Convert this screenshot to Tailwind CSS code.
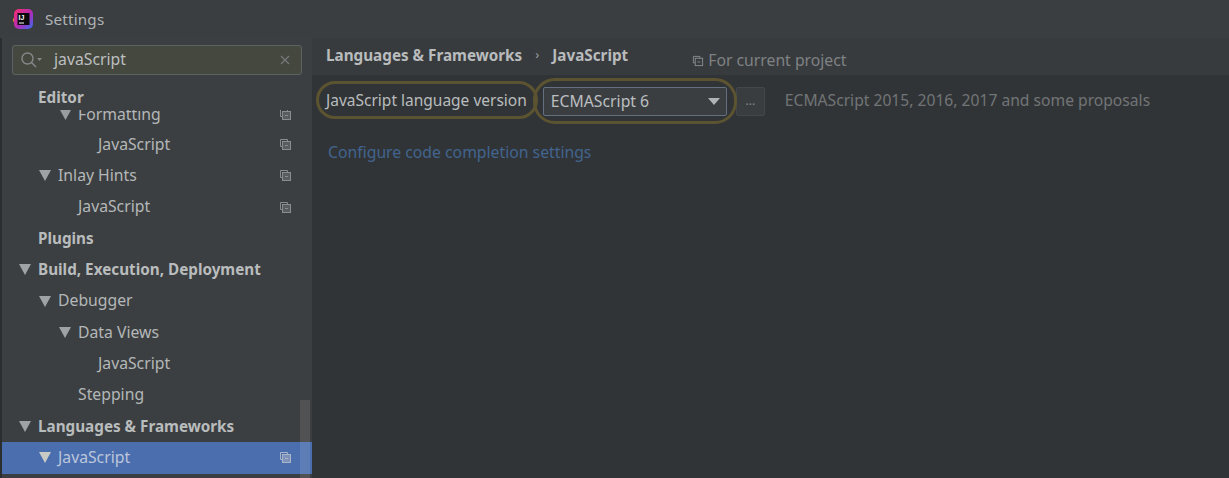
<!DOCTYPE html>
<html lang="en">
<head>
    <meta charset="UTF-8">
    <title>Settings</title>
    <script src="https://cdn.jsdelivr.net/npm/@tailwindcss/browser@4"></script>
</head>
<body class="bg-[#3a3d40] overflow-hidden">
    <div class="w-[1229px] h-[478px] relative flex flex-col font-['Noto_Sans','Open_Sans',sans-serif] text-[15.75px] text-[#b4b7b8] overflow-hidden">

        <!-- Title bar -->
        <div class="h-[38px] shrink-0 pl-[12px] flex items-center gap-[11px] bg-[#3b3e41]">
            <svg width="22" height="22" viewBox="0 0 22 22">
                <defs>
                    <linearGradient id="logo" x1="0" y1="0" x2="1" y2="1">
                        <stop offset="0" stop-color="#fc2d6e"/>
                        <stop offset="0.55" stop-color="#b02cb8"/>
                        <stop offset="1" stop-color="#2f6ff0"/>
                    </linearGradient>
                </defs>
                <circle cx="3.5" cy="12" r="2.5" fill="#f08a2c"/>
                <rect x="2" y="1" width="19" height="20" rx="5" fill="url(#logo)"/>
                <rect x="5.5" y="5" width="12" height="12" fill="#0b0b0d"/>
                <text x="6.5" y="12" font-size="7" font-weight="700" fill="#fff" font-family="Liberation Sans">IJ</text>
                <rect x="7" y="14.5" width="5" height="1" fill="#fff"/>
            </svg>
            <span class="text-[#b0b3b5] text-[15.2px] tracking-[0.2px]">Settings</span>
        </div>

        <div class="flex flex-1 min-h-0">
            <div class="w-[2px] shrink-0 bg-[#2b2d2f]"></div>

            <!-- Sidebar -->
            <aside class="w-[310px] shrink-0 bg-[#3c3f41] flex flex-col relative">
                <div class="mt-[7px] mx-[10px] h-[30px] shrink-0 rounded-[3px] border border-[#5f6264] bg-[#45483f] flex items-center">
                    <svg class="ml-[6px]" width="24" height="20" viewBox="0 0 24 20" fill="none" stroke="#85888a" stroke-width="1.4">
                        <circle cx="8.5" cy="8.5" r="5.5"/>
                        <path d="M12.5 12.5 L17 17"/>
                        <path d="M18 8 h5 l-2.5 3 z" fill="#85888a" stroke="none"/>
                    </svg>
                    <span class="ml-[11px] -mt-[1px] text-[#bcbfc0]">javaScript</span>
                    <svg class="ml-auto mr-[11px]" width="10" height="10" viewBox="0 0 10 10" stroke="#76797b" stroke-width="1.2">
                        <path d="M1 1 L9 9 M9 1 L1 9"/>
                    </svg>
                </div>

                <div class="mt-[10px] h-[25px] shrink-0 pl-[36px] flex items-center font-bold text-[15.25px] text-[#b9bcbd]">Editor</div>

                <!-- clipped by the sticky section header -->
                <div class="h-[19px] shrink-0 overflow-hidden">
                    <div class="-mt-[11px] h-[31px] flex items-center pl-[58px] pr-[20px]">
                        <svg width="11" height="10" viewBox="0 0 11 10" fill="#9a9d9f"><path d="M0 0 H11 L5.5 10 Z"/></svg>
                        <span class="ml-[7px]">Formatting</span>
                        <svg class="ml-auto" width="13" height="13" viewBox="0 0 13 13" fill="none" stroke="#8a8d8f"><path d="M1.5 1.5 h7 v2 M1.5 1.5 v7 h2"/><rect x="3.5" y="3.5" width="8" height="8" fill="#5a5d5f"/><path d="M6 7.5 h3"/></svg>
                    </div>
                </div>

                <div class="h-[31.3px] shrink-0 flex items-center pl-[96px] pr-[20px]">
                    <span>JavaScript</span>
                    <svg class="ml-auto" width="13" height="13" viewBox="0 0 13 13" fill="none" stroke="#8a8d8f"><path d="M1.5 1.5 h7 v2 M1.5 1.5 v7 h2"/><rect x="3.5" y="3.5" width="8" height="8" fill="#5a5d5f"/><path d="M6 7.5 h3"/></svg>
                </div>
                <div class="h-[31.3px] shrink-0 flex items-center pl-[37px] pr-[20px]">
                    <svg width="12" height="11" viewBox="0 0 12 11" fill="#a0a3a5"><path d="M0 0 H12 L6 11 Z"/></svg>
                    <span class="ml-[7px]">Inlay Hints</span>
                    <svg class="ml-auto" width="13" height="13" viewBox="0 0 13 13" fill="none" stroke="#8a8d8f"><path d="M1.5 1.5 h7 v2 M1.5 1.5 v7 h2"/><rect x="3.5" y="3.5" width="8" height="8" fill="#5a5d5f"/><path d="M6 7.5 h3"/></svg>
                </div>
                <div class="h-[31.3px] shrink-0 flex items-center pl-[76px] pr-[20px]">
                    <span>JavaScript</span>
                    <svg class="ml-auto" width="13" height="13" viewBox="0 0 13 13" fill="none" stroke="#8a8d8f"><path d="M1.5 1.5 h7 v2 M1.5 1.5 v7 h2"/><rect x="3.5" y="3.5" width="8" height="8" fill="#5a5d5f"/><path d="M6 7.5 h3"/></svg>
                </div>
                <div class="h-[31.3px] shrink-0 flex items-center pl-[36px] font-bold text-[15.25px] text-[#b9bcbd]">Plugins</div>
                <div class="h-[31.3px] shrink-0 flex items-center pl-[17px] font-bold text-[15.25px] text-[#b9bcbd]">
                    <svg width="12" height="11" viewBox="0 0 12 11" fill="#a0a3a5"><path d="M0 0 H12 L6 11 Z"/></svg>
                    <span class="ml-[7px]">Build, Execution, Deployment</span>
                </div>
                <div class="h-[31.3px] shrink-0 flex items-center pl-[37px]">
                    <svg width="12" height="11" viewBox="0 0 12 11" fill="#a0a3a5"><path d="M0 0 H12 L6 11 Z"/></svg>
                    <span class="ml-[7px]">Debugger</span>
                </div>
                <div class="h-[31.3px] shrink-0 flex items-center pl-[57px]">
                    <svg width="12" height="11" viewBox="0 0 12 11" fill="#a0a3a5"><path d="M0 0 H12 L6 11 Z"/></svg>
                    <span class="ml-[7px]">Data Views</span>
                </div>
                <div class="h-[31.3px] shrink-0 flex items-center pl-[96px]">JavaScript</div>
                <div class="h-[31.3px] shrink-0 flex items-center pl-[76px]">Stepping</div>
                <div class="h-[31.3px] shrink-0 flex items-center pl-[17px] font-bold text-[15.25px] text-[#b9bcbd]">
                    <svg width="12" height="11" viewBox="0 0 12 11" fill="#a0a3a5"><path d="M0 0 H12 L6 11 Z"/></svg>
                    <span class="ml-[7px]">Languages &amp; Frameworks</span>
                </div>
                <div class="h-[32px] shrink-0 flex items-center pl-[37px] pr-[20px] bg-[#4b6eaf]">
                    <svg width="12" height="11" viewBox="0 0 12 11" fill="#c9ccc4"><path d="M0 0 H12 L6 11 Z"/></svg>
                    <span class="ml-[7px] text-[#bcc6da]">JavaScript</span>
                    <svg class="ml-auto" width="13" height="13" viewBox="0 0 13 13" fill="none" stroke="#a9b4c9"><path d="M1.5 1.5 h7 v2 M1.5 1.5 v7 h2"/><rect x="3.5" y="3.5" width="8" height="8" fill="#7f93ba"/><path d="M6 7.5 h3"/></svg>
                </div>
                <!-- scrollbar thumb -->
                <div class="absolute right-[2px] bottom-0 w-[10px] h-[78px] bg-white/10"></div>
            </aside>

            <!-- Main panel -->
            <main class="flex-1 min-w-0 bg-[#313437] flex flex-col">
                <div class="h-[37px] shrink-0 bg-[#383b3e] pl-[14px] flex items-center">
                    <span class="-mt-[3px] font-bold text-[15.25px] text-[#b9bcbd]">Languages &amp; Frameworks</span>
                    <span class="ml-[13px] -mt-[3px] text-[#9a9d9f] text-[13px]">›</span>
                    <span class="ml-[13px] -mt-[3px] font-bold text-[15.25px] text-[#b9bcbd]">JavaScript</span>
                    <svg class="ml-[64px] mt-[8px]" width="12" height="12" viewBox="0 0 13 13" fill="none" stroke="#8a8d8f"><path d="M1.5 1.5 h7 v2 M1.5 1.5 v7 h2"/><rect x="3.5" y="3.5" width="8" height="8"/><path d="M6 7.5 h3"/></svg>
                    <span class="ml-[4px] mt-[8px] text-[#7f8284]">For current project</span>
                </div>
                <div class="mt-[8px] flex items-center h-[36px] pl-[14px]">
                    <span class="text-[15.5px] text-[#b9bcbd]">JavaScript language version</span>
                    <div class="ml-[16px] w-[184px] h-[29px] pt-[1px] rounded-[2px] border border-[#646f80] bg-[#3b3e40] flex items-center pl-[7px] pr-[6px] text-[#bcbfc0]">
                        ECMAScript 6
                        <svg class="ml-auto" width="12" height="7" viewBox="0 0 12 7" fill="#b0b3b5"><path d="M0 0 H12 L6 7 Z"/></svg>
                    </div>
                    <div class="ml-[9px] w-[29px] h-[29px] rounded-[2px] border border-[#43464a] bg-[#3a3d40] flex items-center justify-center text-[#85888a] text-[12px]">...</div>
                    <span class="ml-[20px] -mt-[1px] text-[15.65px] text-[#717476]">ECMAScript 2015, 2016, 2017 and some proposals</span>
                </div>
                <div class="mt-[22px] pl-[16px] text-[#41658f]">Configure code completion settings</div>
            </main>
        </div>

        <!-- hand-drawn annotation rings -->
        <div class="absolute left-[316px] top-[81px] w-[222px] h-[38px] rounded-full border-[3px] border-[#5c5330]"></div>
        <div class="absolute left-[533px] top-[78px] w-[204px] h-[46px] rounded-[22px] border-[3px] border-[#5c5330]"></div>
    </div>
</body>
</html>
